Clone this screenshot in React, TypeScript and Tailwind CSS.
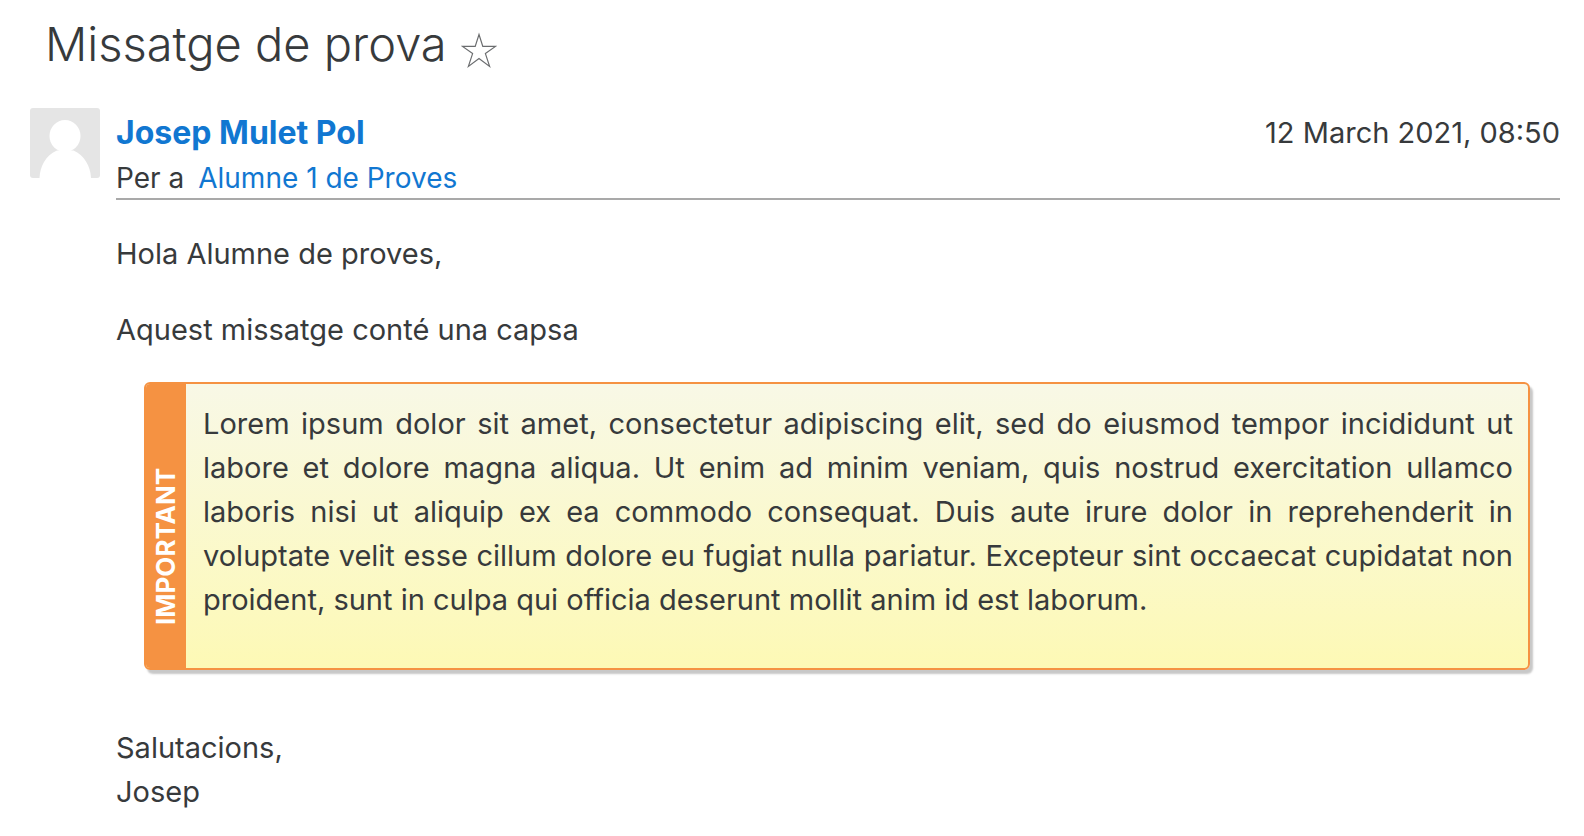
export default function App() {
  return (
    <main className="min-h-screen bg-white pr-6 pl-[30px] pt-[14px] pb-4 font-['Inter',sans-serif] text-[29px] leading-[44px] text-[#373a3c]">
      <header className="flex items-center gap-[14px] pl-[15px]">
        <h1 className="text-[47px] leading-[60px] font-light">Missatge de prova</h1>
        <button type="button" aria-label="Destaca el missatge" className="pt-3">
          <svg viewBox="0 0 36 36" className="size-9" fill="none" stroke="#6b6d6f" strokeWidth="1.2">
            <path d="M18 2.5 L21.8 14.4 H34.5 L24.4 21.6 L28.6 34.4 L18 26.6 L7.4 34.4 L11.6 21.6 L1.5 14.4 H14.2 Z" />
          </svg>
        </button>
      </header>

      <article className="mt-[34px] flex items-start gap-4">
        <svg viewBox="0 0 70 70" className="size-[70px] shrink-0 rounded-[3px] bg-[#e5e5e5]" role="img" aria-label="Josep Mulet Pol">
          <ellipse cx="35" cy="28" rx="15.5" ry="16" fill="#fff" />
          <path d="M9.5 70 C10 58 16 47 27 42.5 H43.5 C54 47 60.5 58 61 70 Z" fill="#fff" />
        </svg>

        <div className="min-w-0 flex-1">
          <div className="border-b-2 border-[#a9a9a9]">
            <div className="flex items-center justify-between pt-[2px] leading-[46px]">
              <a href="#josep" className="text-[32px] font-bold text-[#1177d1]">Josep Mulet Pol</a>
              <time dateTime="2021-03-12T08:50">12 March 2021, 08:50</time>
            </div>
            <div className="flex gap-[14px] pt-[2px] text-[28px] leading-[40px]">
              <span>Per a</span>
              <a href="#alumne" className="text-[#1177d1]">Alumne 1 de Proves</a>
            </div>
          </div>

          <p className="mt-8">Hola Alumne de proves,</p>
          <p className="mt-8">Aquest missatge conté una capsa</p>

          <section className="mt-[30px] mr-[30px] ml-7 flex overflow-hidden rounded-[6px] border-2 border-[#f59242] bg-linear-to-b from-[#f8f8e6] to-[#fdf9b5] shadow-[3px_4px_2px_#c8c8c8]">
            <h2 className="flex w-10 shrink-0 rotate-180 items-center justify-center bg-[#f59242] pb-10 text-[26px] leading-10 font-bold text-white [writing-mode:vertical-rl]">
              IMPORTANT
            </h2>
            <p className="pt-[18px] pr-[15px] pb-[46px] pl-[17px] text-justify">
              Lorem ipsum dolor sit amet, consectetur adipiscing elit, sed do eiusmod tempor incididunt ut labore et dolore magna aliqua. Ut enim ad minim veniam, quis nostrud exercitation ullamco laboris nisi ut aliquip ex ea commodo consequat. Duis aute irure dolor in reprehenderit in voluptate velit esse cillum dolore eu fugiat nulla pariatur. Excepteur sint occaecat cupidatat non proident, sunt in culpa qui officia deserunt mollit anim id est laborum.
            </p>
          </section>

          <p className="mt-14">
            Salutacions,
            <br />
            Josep
          </p>
        </div>
      </article>
    </main>
  );
}
